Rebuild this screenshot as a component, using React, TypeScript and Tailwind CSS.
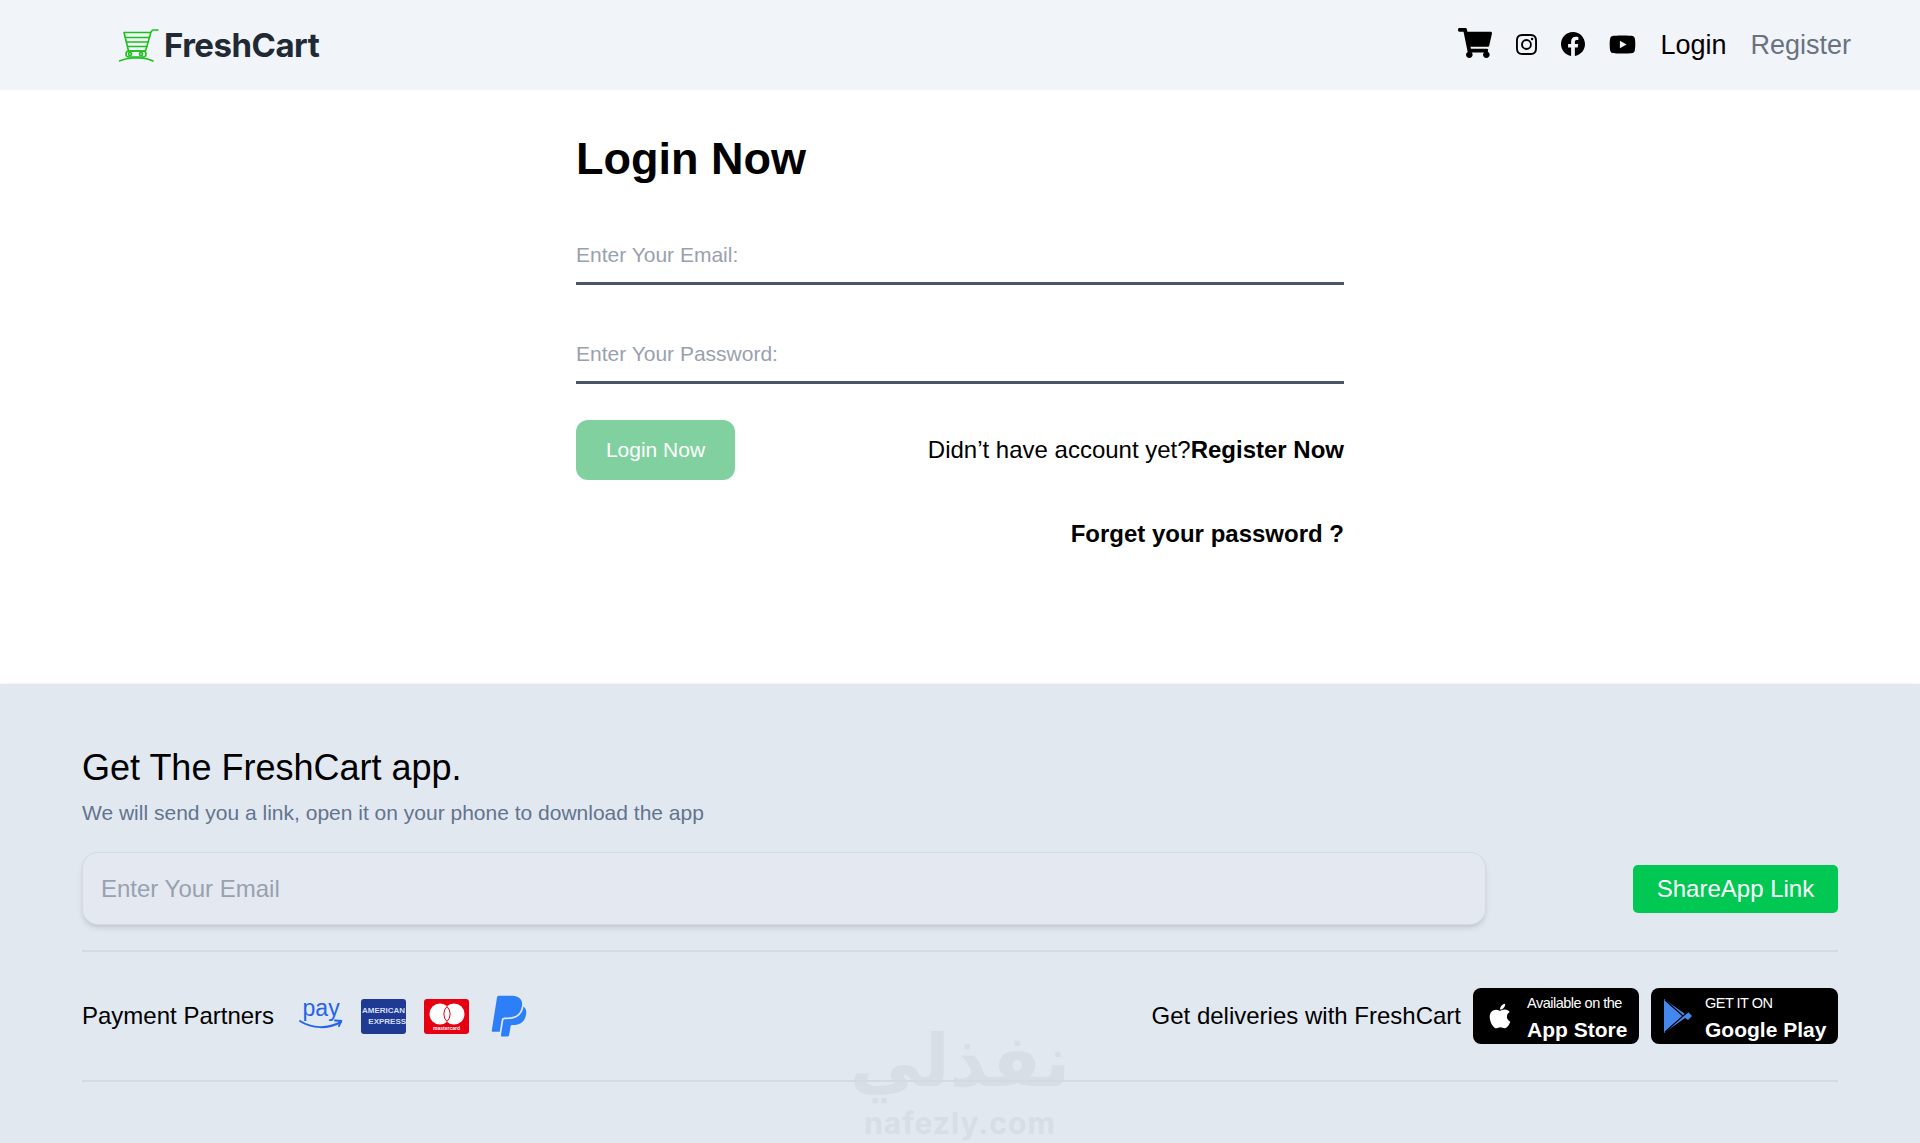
import { BsFacebook, BsInstagram } from 'react-icons/bs'
import { FaApple, FaPaypal, FaShoppingCart, FaYoutube } from 'react-icons/fa'

function CartLogo() {
  return (
    <svg width="40" height="34" viewBox="0 0 40 34" fill="none" stroke="#1cc01c" strokeWidth="1.6" strokeLinecap="round" strokeLinejoin="round">
      <path d="M39 2h-4.500c-1.500 0-2 1-2.500 2l-5.500 19H9.500L5 4.500h27" />
      <path d="M6.500 9.500h24M8 14h21M9 18.500h19" />
      <rect x="7" y="23" width="20" height="6" rx="3" />
      <circle cx="11" cy="26" r="1.500" />
      <circle cx="22" cy="26" r="1.500" />
      <path d="M0 33c5-2 9-3 14-3h6c5 0 10 1 14 3" />
    </svg>
  )
}

function AmazonPay() {
  return (
    <div className="relative flex h-[36px] w-[44px] flex-col items-center">
      <span className="font-['Liberation_Sans',sans-serif] text-[23px] leading-[21px] text-[#2563eb]">pay</span>
      <svg width="44" height="12" viewBox="0 0 44 12" fill="none" stroke="#2563eb" strokeWidth="2" strokeLinecap="round">
        <path d="M1 2c12 8 28 8 41 1" />
        <path d="M36 1.500l6 .5-2 5" />
      </svg>
    </div>
  )
}

function AmexCard() {
  return (
    <div className="flex h-[35px] w-[45px] flex-col justify-center overflow-hidden whitespace-nowrap rounded-[3px] bg-[#1f3a93] font-['Liberation_Sans',sans-serif] text-[8px] font-bold leading-[11px] text-[#d5def8]">
      <span className="text-center">AMERICAN</span>
      <span className="text-right">EXPRESS</span>
    </div>
  )
}

function MasterCard() {
  return (
    <div className="flex h-[35px] w-[45px] flex-col items-center rounded-[3px] bg-[#e60012] pt-[4px]">
      <svg width="36" height="22" viewBox="0 0 36 22">
        <circle cx="11" cy="11" r="10.500" fill="#fff" />
        <circle cx="25" cy="11" r="10.500" fill="#fff" />
        <path d="M18 3.500a10.500 10.500 0 0 1 0 15a10.500 10.500 0 0 1 0-15z" fill="#fff" stroke="#e60012" strokeWidth="1" />
      </svg>
      <span className="font-['Liberation_Sans',sans-serif] text-[5px] font-bold leading-[7px] text-white">mastercard</span>
    </div>
  )
}

function PlayIcon() {
  return (
    <svg width="28" height="34" viewBox="0 0 28 34">
      <path d="M0 0l21 15 3-2 4 4-4 4-3-2L0 34z" fill="#4488ee" />
      <path d="M1 1l18 16L1 33M19 17l5-4" fill="none" stroke="#000" strokeWidth="1.200" />
    </svg>
  )
}

export default function App() {
  return (
    <div className="flex min-h-[1143px] flex-col bg-white font-['Liberation_Sans',sans-serif]">
      {/* Navbar */}
      <nav className="flex h-[90px] items-center justify-between bg-slate-100 pl-[119px] pr-[69px]">
        <a className="flex items-center gap-[5px]">
          <CartLogo />
          <span className="mt-[1px] font-['Inter',sans-serif] text-[33px] font-bold tracking-[-0.5px] text-[#212934]">FreshCart</span>
        </a>
        <div className="flex items-center">
          <FaShoppingCart className="mb-[4px] mr-[24px] text-[34px] text-black" />
          <BsInstagram className="mb-[2px] mr-[24px] text-[21px] text-black" />
          <BsFacebook className="mb-[2px] mr-[24px] text-[24px] text-black" />
          <FaYoutube className="mb-[2px] mr-[24px] text-[27px] text-black" />
          <a className="mr-[24px] text-[27px] text-black">Login</a>
          <a className="text-[27px] text-gray-500">Register</a>
        </div>
      </nav>

      {/* Login form */}
      <main className="mx-auto h-[594px] w-[768px] pt-[41px]">
        <h1 className="text-[45px] font-bold leading-[56px] text-black">Login Now</h1>
        <div className="mt-[41px] flex flex-col gap-[42px]">
          <input
            placeholder="Enter Your Email:"
            className="h-[57px] w-full border-b-[3px] border-gray-600 bg-transparent text-[21px] outline-none placeholder:text-gray-400"
          />
          <input
            placeholder="Enter Your Password:"
            className="h-[57px] w-full border-b-[3px] border-gray-600 bg-transparent text-[21px] outline-none placeholder:text-gray-400"
          />
        </div>
        <div className="mt-[36px] flex items-center justify-between">
          <button className="h-[60px] w-[159px] rounded-xl bg-[#80d19f] text-[21px] text-white">Login Now</button>
          <p className="text-[24px] text-black">
            Didn’t have account yet?<a className="font-bold">Register Now</a>
          </p>
        </div>
        <p className="mt-[36px] text-right text-[24px] font-bold text-black">Forget your password ?</p>
      </main>

      {/* Footer */}
      <footer className="relative flex-1 bg-slate-200 px-[82px] pt-[60px] shadow-[0_-1px_2px_rgba(0,0,0,0.05)]">
        <h2 className="text-[36px] leading-[48px] text-black">Get The FreshCart app.</h2>
        <p className="mt-[5px] text-[21px] leading-[32px] text-slate-500">We will send you a link, open it on your phone to download the app</p>
        <div className="mt-[23px] flex items-center justify-between">
          <input
            placeholder="Enter Your Email"
            className="h-[73px] w-[1404px] rounded-2xl border border-slate-300/70 bg-[#e4e9f1] px-[18px] text-[24px] shadow-md outline-none placeholder:text-gray-400"
          />
          <button className="h-[48px] w-[205px] rounded-[5px] bg-[#00c853] text-[24px] text-white">ShareApp Link</button>
        </div>
        <div className="mt-[25px] flex h-[132px] items-center justify-between border-y-2 border-[#d3dae4]">
          <div className="flex items-center">
            <span className="mr-[25px] text-[24px] text-black">Payment Partners</span>
            <AmazonPay />
            <div className="ml-[18px]"><AmexCard /></div>
            <div className="ml-[18px]"><MasterCard /></div>
            <FaPaypal className="ml-[17px] text-[46px] text-[#2d7ff9]" />
          </div>
          <div className="flex items-center">
            <span className="mr-[12px] text-[24px] text-black">Get deliveries with FreshCart</span>
            <a className="mr-[12px] flex h-[56px] w-[166px] items-center rounded-lg bg-black pl-[13px] text-white">
              <FaApple className="mr-[13px] text-[28px]" />
              <div className="pt-[5px]">
                <p className="text-[14.5px] leading-[18px] tracking-[-0.5px]">Available on the</p>
                <p className="mt-[4px] text-[21px] font-bold leading-[28px]">App Store</p>
              </div>
            </a>
            <a className="flex h-[56px] w-[187px] items-center rounded-lg bg-black pl-[13px] text-white">
              <div className="mr-[13px]"><PlayIcon /></div>
              <div className="pt-[5px]">
                <p className="text-[14.5px] leading-[18px] tracking-[-0.5px]">GET IT ON</p>
                <p className="mt-[4px] text-[21px] font-bold leading-[28px]">Google Play</p>
              </div>
            </a>
          </div>
        </div>

        {/* Watermark */}
        <div className="pointer-events-none absolute left-[853px] top-[335px] flex w-[214px] flex-col items-center text-[#d5dae2] opacity-70">
          <span dir="rtl" className="font-['DejaVu_Sans',sans-serif] text-[72px] font-bold leading-[84px]">نفذلي</span>
          <span className="mt-[2px] font-['Inter',sans-serif] text-[30px] font-bold leading-[36px] tracking-[1px]">nafezly.com</span>
        </div>
      </footer>
    </div>
  )
}
